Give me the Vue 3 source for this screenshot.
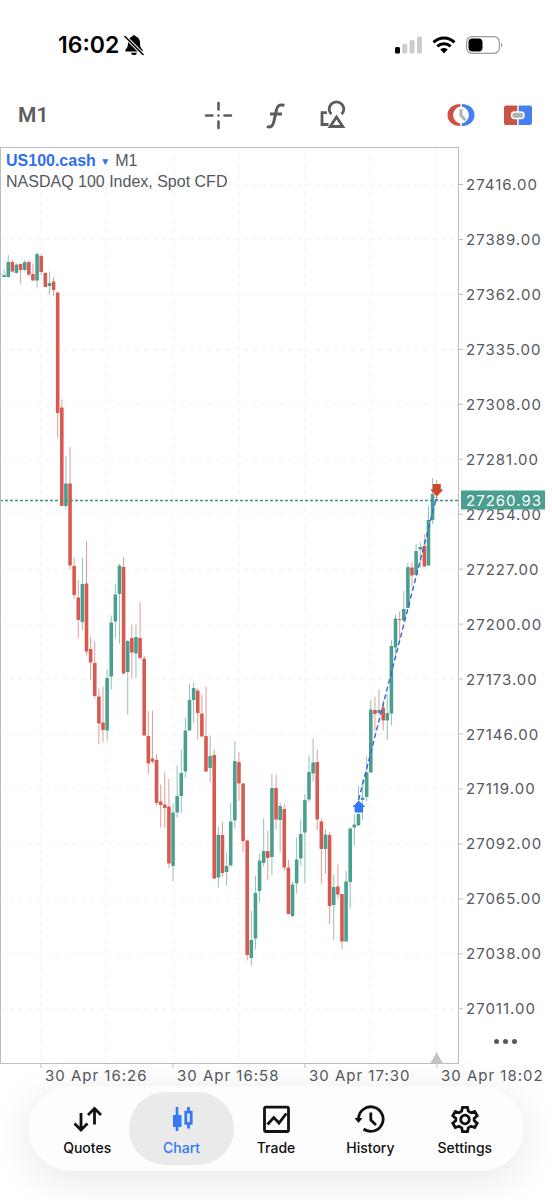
<template>
  <div class="page">
    <header class="status-bar">
      <div class="status-side">
        <span class="clock">16:02</span>
        <svg width="22" height="22" viewBox="0 0 22 22" aria-hidden="true">
          <path d="M11 1.2c.9 0 1.6.6 1.8 1.4 2.6.8 4.200 3 4.200 6 0 4.200 1 5.500 2.500 7.200.6.8.1 1.700-.8 1.700H3.300c-.9 0-1.400-.9-.8-1.700C4 14.100 5 12.800 5 8.600c0-3 1.600-5.200 4.200-6C9.400 1.800 10.100 1.200 11 1.200Z" fill="#000" />
          <path d="M8 18.700h6c-.3 1.400-1.500 2.300-3 2.300s-2.700-.9-3-2.300Z" fill="#000" />
          <path d="M2 2.500L20 20.500" stroke="#fff" stroke-width="3.600" />
          <path d="M2 2.500L20 20.500" stroke="#000" stroke-width="1.600" stroke-linecap="round" />
        </svg>
      </div>
      <div class="status-side status-right">
        <svg width="27" height="18" viewBox="0 0 27 18" aria-hidden="true">
          <rect x="0" y="11" width="5" height="6.500" rx="1.500" fill="#000" />
          <rect x="7.300" y="7.500" width="5" height="10" rx="1.500" fill="#ccc" />
          <rect x="14.600" y="4" width="5" height="13.500" rx="1.500" fill="#ccc" />
          <rect x="22" y="0.500" width="5" height="17" rx="1.500" fill="#ccc" />
        </svg>
        <svg width="24" height="18" viewBox="0 0 24 18" fill="none" stroke="#000" stroke-width="3" aria-hidden="true">
          <path d="M1.500 6.300C7.500.5 16.500.5 22.500 6.300" />
          <path d="M5.300 10.400C9.200 6.700 14.800 6.700 18.700 10.400" />
          <path d="M8.300 13.600C10.500 11.600 13.500 11.600 15.700 13.600L12 17.400Z" fill="#000" stroke="none" />
        </svg>
        <svg width="38" height="18" viewBox="0 0 38 18" aria-hidden="true">
          <rect x="0.600" y="0.600" width="32.800" height="16.800" rx="5.500" fill="none" stroke="#999" stroke-width="1.200" />
          <rect x="2.500" y="2.500" width="14" height="13" rx="3.800" fill="#000" />
          <path d="M35 6.500c1.600.6 1.600 4.400 0 5Z" fill="#999" />
        </svg>
      </div>
    </header>

    <div class="toolbar">
      <button class="timeframe" type="button">M1</button>
      <div class="tools">
        <button class="tool" type="button" aria-label="Crosshair">
          <svg viewBox="0 0 40 40" fill="none" stroke="#5c5c5c" stroke-width="2.600" stroke-linecap="round">
            <path d="M19.500 8v6.500M19.500 26.500V33M7 20.500H13.500M25.500 20.500h6.500M19.500 20.500h.01" />
          </svg>
        </button>
        <button class="tool" type="button" aria-label="Indicators">
          <svg viewBox="0 0 40 40" fill="none" stroke="#5c5c5c" stroke-width="3">
            <path d="M28.500 10.300C23.500 9 21.300 10.800 20.400 15L17.900 26.500C16.900 31 15 32.800 10.800 31.600" />
            <path d="M14 19H26" />
          </svg>
        </button>
        <button class="tool" type="button" aria-label="Objects">
          <svg viewBox="0 0 40 40" fill="none" stroke="#5c5c5c" stroke-width="2.800">
            <path d="M14 17.700H9V29.500H15.500" />
            <path d="M18.300 19.200A7.300 7.300 0 1 1 28.700 19.200" />
            <path d="M23.500 22L29.800 31.500H17.200Z" />
          </svg>
        </button>
      </div>
      <div class="tools tools-right">
        <button class="tool" type="button" aria-label="Pending order">
          <svg viewBox="0 0 40 40">
            <path d="M19.300 9C11 9 6.500 14 6.500 20S11 31 19.300 31V28.400A8.500 8.500 0 0 1 19.300 11.600Z" fill="#cd5246" />
            <path d="M20.700 9C29 9 33.500 14 33.500 20S29 31 20.700 31V28.400A8.500 8.500 0 0 0 20.700 11.600Z" fill="#4580ec" />
            <path d="M20 14.200V20.500L24.500 25.200" fill="none" stroke="#aab6b6" stroke-width="3" />
          </svg>
        </button>
        <button class="tool" type="button" aria-label="One click trading">
          <svg viewBox="0 0 40 40">
            <path d="M8 10.500H19.200V30H8a2 2 0 0 1-2-2V12.500a2 2 0 0 1 2-2Z" fill="#cd5246" />
            <path d="M20.600 10.500H32a2 2 0 0 1 2 2V28a2 2 0 0 1-2 2H20.600Z" fill="#4580ec" />
            <rect x="13.500" y="17" width="12.500" height="6.600" rx="3" fill="#aab6b6" stroke="#fff" stroke-width="1.500" />
          </svg>
        </button>
      </div>
    </div>

    <main class="chart">
      <svg class="chart-canvas" viewBox="0 147 552 939" role="img" aria-label="US100.cash M1 chart">
        <g class="grid-lines">
          <line v-for="x in gridX" :key="'x' + x" :x1="x" :x2="x" y1="147" y2="1063" />
          <line v-for="p in prices" :key="'y' + p.label" x1="0" x2="458" :y1="p.y" :y2="p.y" />
        </g>

        <g v-for="c in candles" :key="c.x" :class="c.dir">
          <line class="wick" :x1="c.x" :x2="c.x" :y1="c.high" :y2="c.low" />
          <rect :x="c.x - 1.8" :y="c.top" width="3.600" :height="c.height" rx="0.400" />
        </g>

        <line class="price-line" x1="0" x2="459" :y1="lastPrice.y" :y2="lastPrice.y" />
        <line class="trade-line" x1="358.600" y1="800" x2="436.600" y2="497" />
        <path class="arrow-buy" d="M358.800 800.500L365.300 807H363V812.500H354.600V807H352.300Z" />
        <path class="arrow-sell" d="M436.800 496.500L430.200 489.500H432.800V484H440.800V489.500H443.400Z" />

        <path class="marker" d="M436.600 1052L443 1063.500H430.200Z" />
        <rect class="frame" x="0.500" y="147.500" width="458" height="916" />

        <g class="axis">
          <template v-for="p in prices" :key="p.label">
            <line x1="459" x2="463" :y1="p.y" :y2="p.y" />
            <text x="466" :y="p.y + 5.500">{{ p.label }}</text>
          </template>
          <template v-for="t in times" :key="t.label">
            <line :x1="t.x" :x2="t.x" y1="1064" y2="1068" />
            <text :x="t.x + 4" y="1081">{{ t.label }}</text>
          </template>
        </g>

        <rect class="price-tag" x="461" :y="lastPrice.y - 10" width="84" height="19" />
        <text class="price-tag-text" x="466" :y="lastPrice.y + 5.500">{{ lastPrice.label }}</text>
      </svg>

      <div class="symbol">
        <div class="symbol-row">
          <button class="symbol-name" type="button">US100.cash <span class="caret">▼</span></button>
          <span>M1</span>
        </div>
        <div>NASDAQ 100 Index, Spot CFD</div>
      </div>

      <button class="more" type="button" aria-label="More">
        <span></span><span></span><span></span>
      </button>
    </main>

    <nav class="tab-bar">
      <button
        v-for="tab in tabs"
        :key="tab.name"
        type="button"
        :class="['tab', { active: tab.name === activeTab }]"
        @click="activeTab = tab.name"
      >
        <svg viewBox="0 0 36 36" fill="none" stroke="currentColor" stroke-width="2.800">
          <path v-for="d in tab.strokes" :key="d" :d="d" />
          <path v-if="tab.solid" :d="tab.solid" fill="currentColor" stroke="none" />
        </svg>
        <span>{{ tab.name }}</span>
      </button>
    </nav>
  </div>
</template>

<script setup>
import { ref } from 'vue';

const STEP = 4.12;
const activeTab = ref('Chart');

// direction, body top, body bottom, high, low
const bars = [
  ['d', 274, 275, 274, 275], ['u', 275, 277, 269.5, 277.5], ['u', 262, 277, 255, 277.5], ['d', 262, 271.5, 260, 272.5],
  ['u', 264.5, 273, 263.5, 273.5], ['d', 264, 270, 263.5, 283.5], ['u', 262, 270, 260, 271.5], ['d', 262, 274.5, 260, 276],
  ['d', 274, 280.5, 263.5, 281], ['u', 254, 280.5, 252.5, 287.5], ['d', 256, 272, 254, 274.5], ['d', 273, 287, 272, 287],
  ['u', 283, 286, 271.5, 294.5], ['d', 281.5, 290, 277.5, 296], ['d', 292.5, 413, 292, 437.5], ['d', 407.5, 506, 399.5, 506],
  ['u', 483.5, 506, 456, 509.5], ['d', 483.5, 565.5, 447, 569.5], ['d', 566, 595, 557.5, 598.5], ['d', 597.5, 620, 580, 638.5],
  ['u', 584, 622, 558, 630], ['d', 583.5, 651.5, 541, 655.5], ['d', 649, 662.5, 636.5, 680.5], ['d', 663, 696, 641.5, 698.5],
  ['d', 696.5, 723.5, 688.5, 744], ['d', 722.5, 730, 686.5, 742.5], ['u', 678, 730.5, 669.5, 740.5], ['u', 622.5, 676.5, 615.5, 689.5],
  ['u', 594.5, 621.5, 584, 638.5], ['u', 565.5, 594, 564, 643.5], ['d', 567, 673.5, 557, 674.5], ['u', 641, 672, 640, 714.5],
  ['d', 638, 652.5, 624.5, 678.5], ['u', 637, 653.5, 624.5, 678], ['d', 638, 658, 602, 659], ['d', 658.5, 735.5, 656, 736.5],
  ['d', 736, 763.5, 711, 774], ['d', 758.5, 761.5, 710.5, 763.5], ['d', 760, 803, 754, 805.5], ['d', 801.5, 805, 784.5, 827.5],
  ['d', 804.5, 808, 772.5, 827.5], ['d', 806.5, 863.5, 779, 868], ['u', 812.5, 866, 803.5, 881], ['u', 796, 812.5, 765.5, 817.5],
  ['u', 773, 796, 749.5, 813], ['u', 730.5, 771.5, 717.5, 777.5], ['u', 700, 730.5, 684, 731], ['u', 688, 700, 682.5, 722.5],
  ['d', 690.5, 713, 688.5, 740], ['d', 713.5, 736.5, 694.5, 737], ['d', 736, 771.5, 686.5, 772], ['u', 756, 768, 735.5, 782.5],
  ['d', 755, 878.5, 749.5, 879], ['u', 835, 877.5, 826.5, 887.5], ['d', 835, 873, 822, 876.5], ['u', 866, 872, 852.5, 885.5],
  ['u', 821.5, 865.5, 803, 866.5], ['u', 761, 820.5, 741.5, 828.5], ['d', 762, 783.5, 752.5, 801], ['d', 783.5, 841, 783, 852],
  ['d', 840.5, 955, 840, 960.5], ['u', 940, 958, 911, 965.5], ['u', 893, 938.5, 876, 949.5], ['u', 860.5, 891, 853.5, 902],
  ['u', 851, 863, 818.5, 866.5], ['d', 851, 858, 830.5, 880.5], ['u', 788, 857, 774, 875], ['d', 788, 819.5, 774.5, 829.5],
  ['u', 806, 820, 802.5, 852], ['d', 809, 867.5, 804, 870.5], ['d', 867.5, 914, 860, 914.5], ['u', 884.5, 916, 881.5, 917.5],
  ['u', 859.5, 883.5, 837.5, 893.5], ['u', 834, 858.5, 819.5, 865.5], ['u', 800, 832.5, 794, 883.5], ['u', 772, 799.5, 755.5, 802.5],
  ['u', 762.5, 773.5, 738.5, 781.5], ['d', 762, 819.5, 749.5, 830], ['d', 821.5, 849, 819, 884.5], ['u', 834.5, 849, 829, 873.5],
  ['d', 835, 906, 832.5, 924], ['u', 887, 905, 874.5, 940], ['d', 886.5, 894.5, 864.5, 898.5], ['d', 894, 941.5, 894, 949],
  ['u', 881.5, 941.5, 871, 941.5], ['u', 828.5, 882, 827.5, 908.5], ['u', 824.5, 827.5, 814, 845.5], ['u', 814, 825.5, 786, 825.5],
  ['u', 797.5, 800, 780, 820], ['u', 772.5, 797, 756.5, 801.5], ['u', 709.5, 772.5, 700, 772.5], ['d', 710, 714, 696.5, 731.5],
  ['u', 710, 713, 689.5, 716], ['d', 707.5, 720.5, 700, 730.5], ['u', 713, 720.5, 694, 740], ['u', 646, 713.5, 640, 725.5],
  ['u', 618.5, 647.5, 614.5, 656], ['d', 619, 620, 611.5, 640], ['u', 609, 620.5, 591, 621], ['u', 567, 608, 563, 608],
  ['d', 567.5, 575.5, 562, 586], ['u', 551, 575, 544, 576], ['u', 547, 549.5, 542, 568], ['d', 546, 566.5, 534, 567],
  ['u', 520, 565.5, 505.5, 566], ['u', 494, 520, 478, 524], ['d', 499, 500, 480, 501],
];

const candles = bars.map(([dir, top, bottom, high, low], i) => ({
  dir: dir === 'u' ? 'up' : 'down',
  x: i * STEP,
  top,
  height: bottom - top,
  high,
  low,
}));

const prices = Array.from({ length: 16 }, (_, i) => ({
  label: (27416 - i * 27).toFixed(2),
  y: 184.5 + i * 54.95,
}));
const lastPrice = { label: '27260.93', y: 500.5 };

const gridX = [41, 107, 173, 239, 305, 371, 436.5];
const times = [
  { x: 41, label: '30 Apr 16:26' },
  { x: 173, label: '30 Apr 16:58' },
  { x: 305, label: '30 Apr 17:30' },
  { x: 437, label: '30 Apr 18:02' },
];

const tabs = [
  { name: 'Quotes', strokes: ['M12 12V29M5.5 22.5L12 29L18.500 22.5', 'M25.500 23.500V7.500M19 14L25.500 7.500L32 14'] },
  {
    name: 'Chart',
    strokes: ['M21.800 11.200H27.200V22.300H21.800ZM24.500 6V11M24.500 22V27.500'],
    solid: 'M9 14H11.700V6H14.300V14H17.500V26H14.300V30H11.700V26H9Z',
  },
  { name: 'Trade', strokes: ['M8 6.200H29a1.500 1.500 0 0 1 1.500 1.500V29a1.500 1.500 0 0 1-1.500 1.500H8A1.500 1.500 0 0 1 6.500 29V7.700A1.500 1.500 0 0 1 8 6.200Z', 'M9.500 23.500L15.800 16.500L21 22L28.300 12.500'] },
  {
    name: 'History',
    strokes: ['M6.500 18A12.300 12.300 0 1 1 11.500 28', 'M18.800 11.500V19L24 24'],
    solid: 'M2.500 17H10.500L6.500 22Z',
  },
  {
    name: 'Settings',
    strokes: [
      'M15.500 6.300H20.500L21.300 10.200L24 11.800L27.700 10.500L30.200 14.800L27.200 17.400V19.600L30.200 22.200L27.700 26.500L24 25.200L21.300 26.800L20.500 30.700H15.500L14.700 26.800L12 25.200L8.300 26.500L5.800 22.200L8.800 19.600V17.400L5.800 14.800L8.300 10.500L12 11.800L14.700 10.200Z',
      'M22.300 18.500A4.300 4.300 0 1 1 13.700 18.500A4.300 4.300 0 1 1 22.300 18.500Z',
    ],
  },
];
</script>

<style>
body { margin: 0; background: #fff; }
</style>

<style scoped>
.page { min-height: 100vh; background: #fff; font-family: Inter, "Liberation Sans", sans-serif; color: #111; overflow: hidden; }
button { background: none; border: none; padding: 0; margin: 0; font: inherit; color: inherit; cursor: pointer; }

.status-bar { display: flex; justify-content: space-between; align-items: center; height: 90px; padding: 0 48px 0 58px; }
.status-side { display: flex; align-items: center; gap: 4px; }
.status-right { gap: 10px; }
.clock { font-size: 23px; font-weight: 600; line-height: 28px; color: #000; }

.toolbar { display: grid; grid-template-columns: 1fr auto 1fr; align-items: center; height: 50px; padding: 0 14px 7px; }
.timeframe { justify-self: start; padding-left: 4px; font-family: Roboto, sans-serif; font-size: 21px; font-weight: 600; color: #5c5c5c; }
.tools { display: flex; gap: 17px; }
.tools-right { justify-self: end; }
.tool, .tool svg { display: block; width: 40px; height: 40px; }

.chart { position: relative; }
.chart-canvas { display: block; width: 100%; height: auto; }
.grid-lines line { stroke: #f3f3f3; stroke-width: 1; stroke-dasharray: 5 4; }
.up rect { fill: #4a9f8e; }
.up .wick { stroke: #8fc2b7; }
.down rect { fill: #d9584f; }
.down .wick { stroke: #e59b96; }
.wick { stroke-width: 1; }
.price-line { stroke: #3f9583; stroke-width: 1.3; stroke-dasharray: 3 2; }
.trade-line { stroke: #3563e0; stroke-width: 1.4; stroke-dasharray: 5 3; }
.arrow-buy { fill: #3478f6; }
.arrow-sell { fill: #d1452f; }
.marker { fill: #c4c4c4; }
.frame { fill: none; stroke: #bdbdbd; stroke-width: 1; }
.axis line { stroke: #bdbdbd; stroke-width: 1; }
.axis text, .price-tag-text { font-size: 15px; letter-spacing: 1px; fill: #55585e; }
.price-tag { fill: #4a9f8e; }
.price-tag-text { fill: #fff; }

.symbol { position: absolute; top: 4px; left: 6px; font-family: "Liberation Sans", sans-serif; font-size: 16px; line-height: 20px; color: #55585e; }
.symbol-row { display: flex; gap: 5px; }
.symbol-name { color: #3070ee; font-weight: bold; }
.caret { font-size: 10px; vertical-align: 1px; }

.more { position: absolute; right: 30px; bottom: 37px; display: flex; gap: 4px; padding: 5px; }
.more span { width: 5px; height: 5px; border-radius: 50%; background: #55585e; }

.tab-bar { position: relative; display: flex; margin: 0 28px 29px; padding: 6px 12px; border-radius: 43px; background: #fdfdfd; box-shadow: 0 8px 40px rgba(0, 0, 0, 0.1); }
.tab { flex: 1; display: flex; flex-direction: column; align-items: center; gap: 2px; margin: 0 -5px; padding: 9px 0 8px; border-radius: 37px; font-size: 14px; font-weight: 500; line-height: 18px; }
.tab svg { width: 36px; height: 36px; }
.tab.active { background: #eaeaea; color: #3478f6; }
</style>
